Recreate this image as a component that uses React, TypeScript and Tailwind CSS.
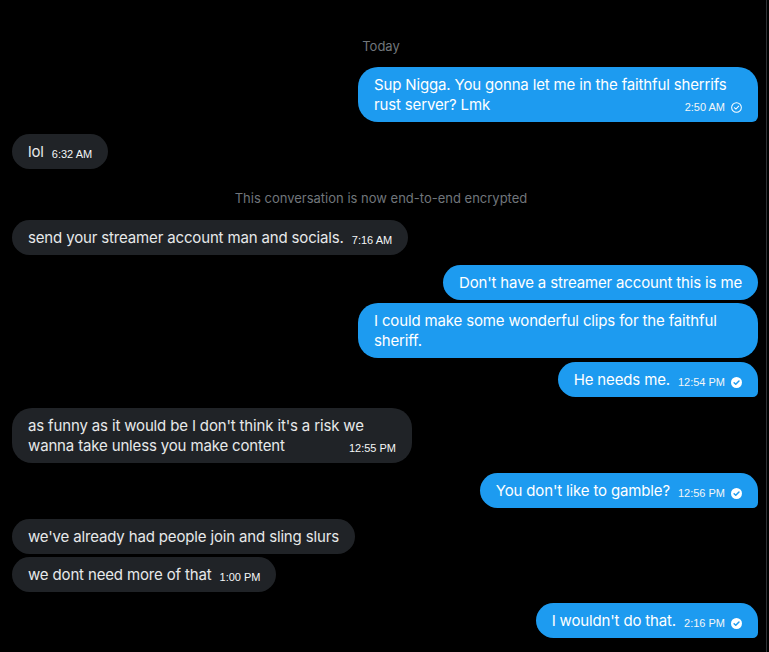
import React from 'react';

type Msg = {
  text: string;
  time?: string;
  mine?: boolean;
  read?: boolean;
  last?: boolean;
  gap: string;
};

function Check({ read }: { read?: boolean }) {
  if (read) {
    return (
      <svg width="11" height="11" viewBox="0 0 12 12" className="shrink-0">
        <circle cx="6" cy="6" r="6" fill="#ffffff" />
        <path d="M3.4 6.2 5.2 8 8.7 4.3" fill="none" stroke="#1d9bf0" strokeWidth="1.6" strokeLinecap="round" strokeLinejoin="round" />
      </svg>
    );
  }
  return (
    <svg width="11" height="11" viewBox="0 0 12 12" className="shrink-0">
      <circle cx="6" cy="6" r="5.3" fill="none" stroke="#ffffff" strokeWidth="1.1" />
      <path d="M3.7 6.2 5.3 7.7 8.4 4.5" fill="none" stroke="#ffffff" strokeWidth="1.1" strokeLinecap="round" strokeLinejoin="round" />
    </svg>
  );
}

function Bubble({ m }: { m: Msg }) {
  const color = m.mine ? 'bg-[#1d9bf0] text-white' : 'bg-[#202327] text-[#e7e9ea]';
  const corner = m.mine && m.last ? 'rounded-[20px] rounded-br-[6px]' : 'rounded-[20px]';
  return (
    <div className={`flex ${m.mine ? 'justify-end' : 'justify-start'} ${m.gap}`}>
      <div className={`max-w-[400px] px-4 pt-2 pb-[7px] text-[15px] leading-5 tracking-[-0.15px] ${color} ${corner}`}>
        {m.text}
        {m.time && (
          <span className="float-right ml-2 mt-[4px] flex items-center gap-[6px] text-[11px] leading-4 tracking-normal text-[#f4f6f7]" style={{ fontFamily: '"Liberation Sans", Arial, sans-serif' }}>
            {m.time}
            {m.mine && <Check read={m.read} />}
          </span>
        )}
      </div>
    </div>
  );
}

export default function App() {
  const top: Msg[] = [
    { text: 'Sup Nigga. You gonna let me in the faithful sherrifs rust server? Lmk', time: '2:50 AM', mine: true, last: true, gap: 'mt-[13px]' },
    { text: 'lol', time: '6:32 AM', gap: 'mt-[12px]' },
  ];
  const rest: Msg[] = [
    { text: 'send your streamer account man and socials.', time: '7:16 AM', gap: 'mt-[14px]' },
    { text: "Don't have a streamer account this is me", mine: true, gap: 'mt-[10px]' },
    { text: 'I could make some wonderful clips for the faithful sheriff.', mine: true, gap: 'mt-[3px]' },
    { text: 'He needs me.', time: '12:54 PM', mine: true, read: true, last: true, gap: 'mt-[4px]' },
    { text: "as funny as it would be I don't think it's a risk we wanna take unless you make content", time: '12:55 PM', gap: 'mt-[11px]' },
    { text: "You don't like to gamble?", time: '12:56 PM', mine: true, read: true, last: true, gap: 'mt-[10px]' },
    { text: "we've already had people join and sling slurs", gap: 'mt-[11px]' },
    { text: 'we dont need more of that', time: '1:00 PM', gap: 'mt-[3px]' },
    { text: "I wouldn't do that.", time: '2:16 PM', mine: true, read: true, last: true, gap: 'mt-[11px]' },
  ];

  return (
    <div className="h-[652px] w-[769px] overflow-hidden bg-black" style={{ fontFamily: 'Inter, "Noto Sans", sans-serif' }}>
      <div className="h-full w-[767px] border-r border-[#2f3336] pl-3 pr-2 pt-[38px]">
        <div className="pr-2 text-center text-[13px] leading-4 text-[#71767b]">Today</div>
        {top.map((m, i) => (
          <Bubble key={i} m={m} />
        ))}
        <div className="mt-[21px] pr-2 text-center text-[13px] leading-4 text-[#71767b]">
          This conversation is now end-to-end encrypted
        </div>
        {rest.map((m, i) => (
          <Bubble key={i} m={m} />
        ))}
      </div>
    </div>
  );
}
